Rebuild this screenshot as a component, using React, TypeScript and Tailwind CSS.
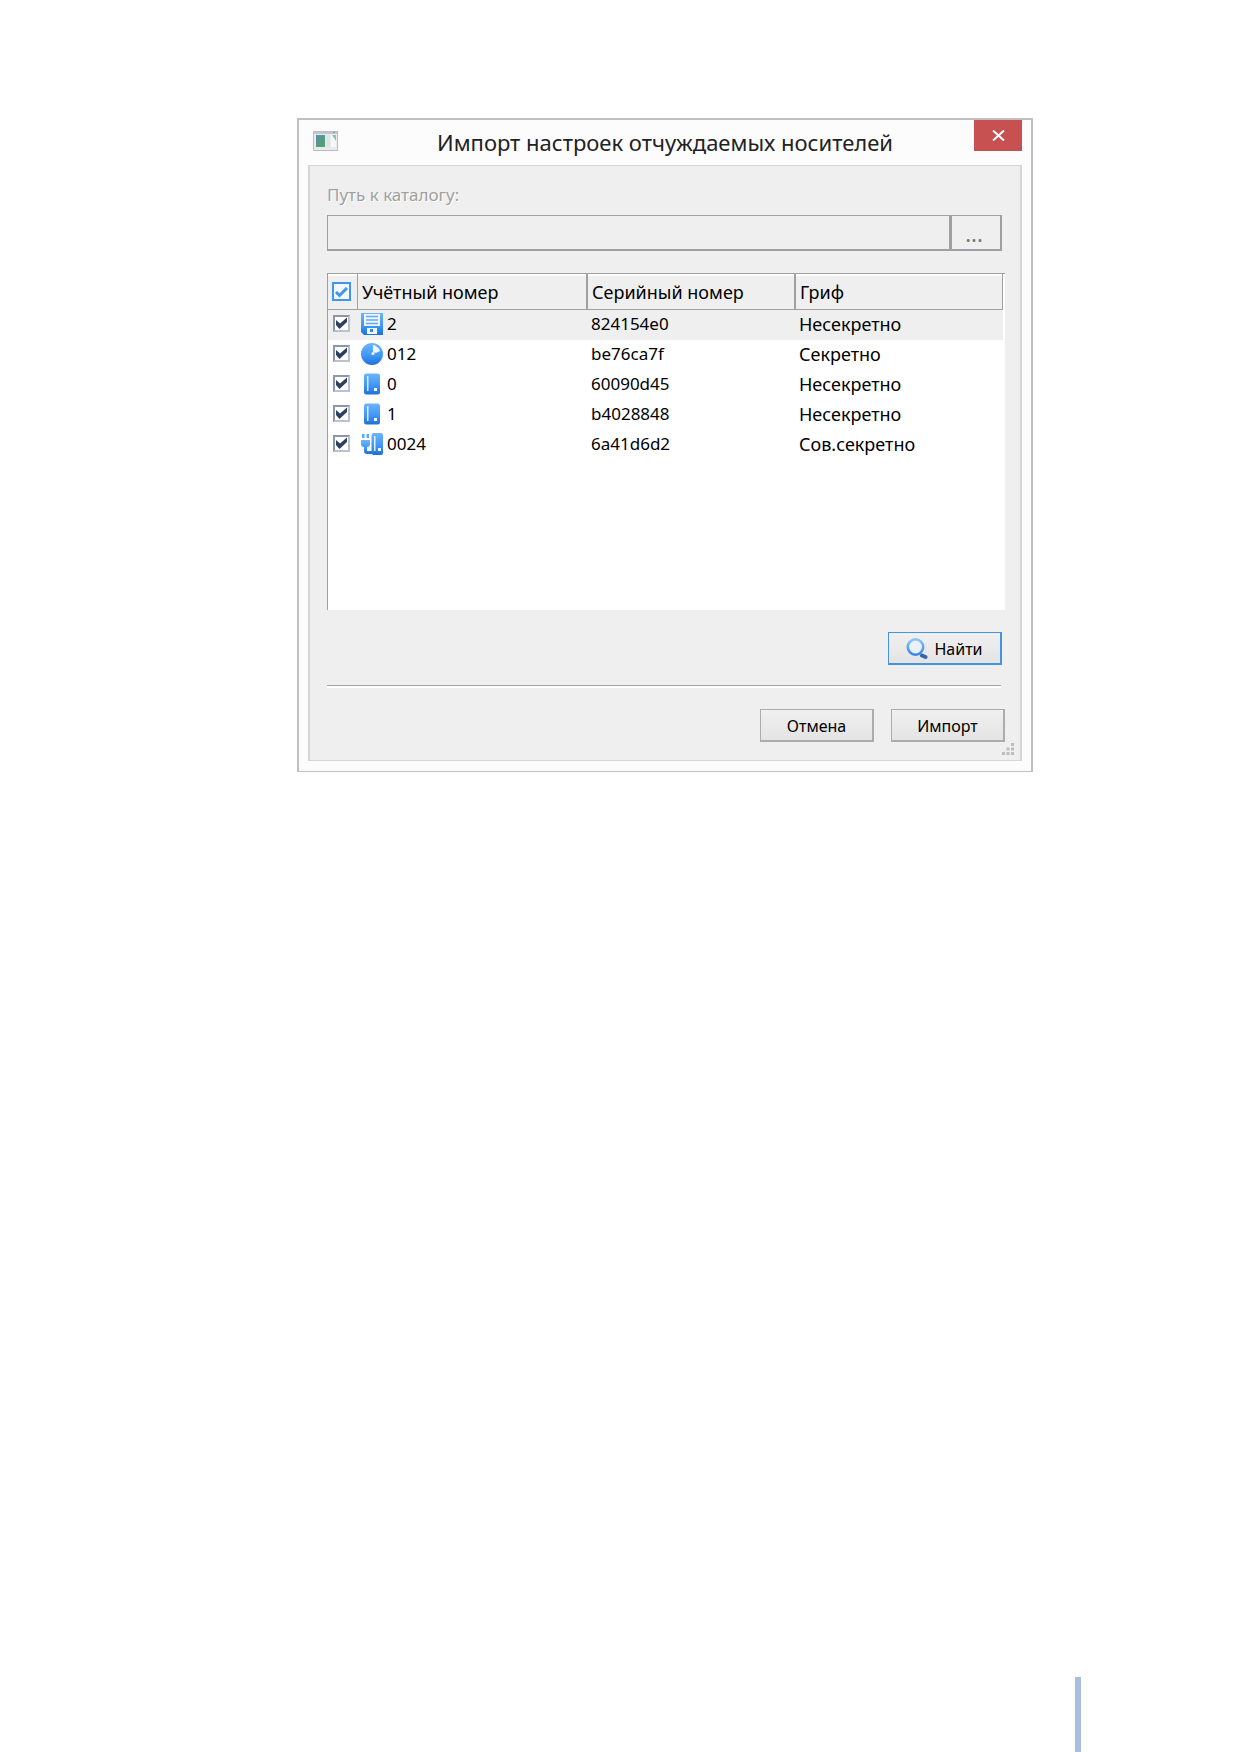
import React, { useState } from "react";
import clsx from "clsx";

type MediaKind = "floppy" | "disc" | "drive" | "usb";

interface MediaItem {
  id: string;
  serial: string;
  level: string;
  kind: MediaKind;
}

const items: MediaItem[] = [
  { id: "2", serial: "824154e0", level: "Несекретно", kind: "floppy" },
  { id: "012", serial: "be76ca7f", level: "Секретно", kind: "disc" },
  { id: "0", serial: "60090d45", level: "Несекретно", kind: "drive" },
  { id: "1", serial: "b4028848", level: "Несекретно", kind: "drive" },
  { id: "0024", serial: "6a41d6d2", level: "Сов.секретно", kind: "usb" },
];

function WindowIcon() {
  return (
    <svg width="25" height="20" viewBox="0 0 25 20" aria-hidden="true">
      <defs>
        <linearGradient id="win-pane" x1="0" y1="0" x2="1" y2="1">
          <stop offset="0" stopColor="#5b8fa6" />
          <stop offset="1" stopColor="#4fa568" />
        </linearGradient>
      </defs>
      <rect x="0.5" y="0.5" width="24" height="19" fill="#e9ebee" stroke="#b9bcc4" />
      <rect x="1" y="1" width="23" height="2" fill="#c3c6d2" />
      <rect x="20" y="1" width="2" height="1" fill="#8790a8" />
      <rect x="3" y="4" width="9" height="12" fill="url(#win-pane)" />
      <rect x="13" y="4" width="4" height="12" fill="#dfe4e6" />
      <rect x="18" y="4" width="5" height="12" fill="#f5f8f6" />
      <path d="M19 4h4v6z" fill="#8fc0a8" />
    </svg>
  );
}

function MediaIcon({ kind }: { kind: MediaKind }) {
  return (
    <svg width="22" height="22" viewBox="0 0 22 22" className="shrink-0" aria-hidden="true">
      <defs>
        <linearGradient id="media-blue" x1="0" y1="0" x2="0" y2="1">
          <stop offset="0" stopColor="#6db5fb" />
          <stop offset="0.6" stopColor="#3d95f5" />
          <stop offset="1" stopColor="#1f6fd6" />
        </linearGradient>
      </defs>
      {kind === "floppy" && (
        <>
          <path d="M0 0h22v22H3l-3-3z" fill="url(#media-blue)" />
          <rect x="3" y="1" width="16" height="12" fill="#eef6ff" />
          <path d="M5 3.500h12M5 7h12M5 10.500h12" stroke="#62aaf5" strokeWidth="1.500" />
          <rect x="6" y="15" width="10" height="6" fill="#eef6ff" />
          <rect x="9" y="16" width="3" height="3" fill="#3486e6" />
        </>
      )}
      {kind === "disc" && (
        <>
          <circle cx="11" cy="11" r="11" fill="url(#media-blue)" />
          <path d="M12 9V2q2.500 0 4 2 2.500 1 3 4l-4 2z" fill="#eef6ff" />
          <circle cx="12" cy="10.500" r="1.600" fill="#eef6ff" />
        </>
      )}
      {kind === "drive" && (
        <>
          <rect x="3" y="0.500" width="16" height="21" rx="2.500" fill="url(#media-blue)" />
          <rect x="6" y="3" width="1.500" height="15" fill="#d9ecff" />
          <rect x="13" y="15" width="3" height="3" fill="#f4faff" />
        </>
      )}
      {kind === "usb" && (
        <>
          <rect x="1" y="1" width="2.500" height="4" fill="#5aa9f8" />
          <rect x="5.500" y="1" width="2.500" height="4" fill="#5aa9f8" />
          <path d="M0 7h9v4q0 3-3 3v4h5v3H6q-3 0-3-3v-4q-3 0-3-3z" fill="url(#media-blue)" />
          <path d="M12 0h8q2 0 2 2v18q0 2-2 2h-8q-1.500-1-1.500-3V3q0-2 1.500-3z" fill="url(#media-blue)" />
          <rect x="13" y="3" width="1.500" height="15" fill="#e4f2ff" />
          <rect x="17" y="15" width="3" height="3" fill="#f4faff" />
        </>
      )}
    </svg>
  );
}

function SearchIcon() {
  return (
    <svg width="22" height="22" viewBox="0 0 22 22" aria-hidden="true">
      <defs>
        <linearGradient id="lens" x1="0" y1="0" x2="0" y2="1">
          <stop offset="0" stopColor="#8cc6fb" />
          <stop offset="1" stopColor="#2f86ec" />
        </linearGradient>
      </defs>
      <circle cx="9.500" cy="9" r="7.700" fill="#eaf1f8" stroke="url(#lens)" strokeWidth="2.600" />
      <path d="M16 17.500l3.500 1.500" stroke="#3565a8" strokeWidth="4" strokeLinecap="round" />
    </svg>
  );
}

interface TickProps {
  checked: boolean;
  onChange: () => void;
  label: string;
  header?: boolean;
}

function Tick({ checked, onChange, label, header }: TickProps) {
  return (
    <label className="grid w-fit place-items-center">
      <input
        type="checkbox"
        aria-label={label}
        checked={checked}
        onChange={onChange}
        className={clsx(
          "col-start-1 row-start-1 appearance-none",
          header
            ? "h-[19px] w-[19px] border-2 border-[#3e97ee] bg-[#f4f8fc]"
            : "h-[17px] w-[17px] border-2 border-t-[#8b97ab] border-l-[#8b97ab] border-r-[#b9c2d0] border-b-[#b9c2d0] bg-white"
        )}
      />
      {checked && (
        <svg
          width="17"
          height="17"
          viewBox="0 0 17 17"
          className="pointer-events-none col-start-1 row-start-1"
          fill="none"
          aria-hidden="true"
        >
          {header ? (
            <path d="M3 9l3.500 3.500L14 5" stroke="#3e97ee" strokeWidth="3" />
          ) : (
            <path d="M3 5v5l3.500 4L14 7V2.500L7 8.500z" fill="#2c4060" />
          )}
        </svg>
      )}
    </label>
  );
}

function SizeGrip() {
  return (
    <svg width="12" height="12" viewBox="0 0 12 12" fill="#bdbdbd" aria-hidden="true">
      <path d="M9 0h3v3H9zM9 4.500h3v3H9zM4.500 4.500h3v3h-3zM9 9h3v3H9zM4.500 9h3v3h-3zM0 9h3v3H0z" />
    </svg>
  );
}

const pushButton =
  "flex h-[33px] w-[114px] items-center justify-center border border-r-2 border-b-2 bg-linear-to-b from-[#f0f0f0] to-[#e4e4e4] pt-px text-[16px] leading-6";

const headCell = "border-b border-[#a0a0a0] pl-1 font-normal shadow-[inset_0_2px_0_#fff]";

export default function App() {
  const [checked, setChecked] = useState<string[]>(items.map((item) => item.id));

  const toggle = (id: string) =>
    setChecked((prev) => (prev.includes(id) ? prev.filter((x) => x !== id) : [...prev, id]));

  const allChecked = checked.length === items.length;

  return (
    <div className="flex min-h-screen flex-col bg-white pt-[118px] font-['Noto_Sans','Open_Sans',sans-serif] text-black">
      <section
        role="dialog"
        aria-labelledby="dialog-title"
        className="mr-[206px] ml-[297px] flex flex-col border-2 border-b border-[#c0c0c0] bg-[#fcfcfc] px-[9px] pb-[10px]"
      >
        <header className="flex h-[45px] items-start">
          <div className="w-12 pt-[11px] pl-[5px]">
            <WindowIcon />
          </div>
          <h1 id="dialog-title" className="flex-1 pt-[6px] text-center text-[22px] leading-8 text-[#222]">
            Импорт настроек отчуждаемых носителей
          </h1>
          <button
            type="button"
            aria-label="Закрыть"
            className="flex h-[31px] w-12 items-center justify-center bg-[#c75050]"
          >
            <svg width="13" height="11" viewBox="0 0 13 11" stroke="#fff" strokeWidth="2" aria-hidden="true">
              <path d="M1 0.500l11 10M12 0.500l-11 10" />
            </svg>
          </button>
        </header>

        <div className="flex flex-col border-x-2 border-y border-[#d6d6d6] bg-[#efefef] pt-[17px] pr-[15px] pb-[5px] pl-[17px]">
          <label
            htmlFor="catalog"
            className="text-[17px] leading-6 text-[#a0a0a0] [text-shadow:1px_1px_0_#fff]"
          >
            Путь к каталогу:
          </label>
          <div className="mt-2 mr-[3px] flex h-9">
            <input
              id="catalog"
              type="text"
              disabled
              className="min-w-0 flex-1 border border-r-2 border-b-2 border-[#a0a0a0] bg-[#efefef] px-2"
            />
            <button
              type="button"
              aria-label="Обзор"
              disabled
              className="w-[51px] border border-r-2 border-b-2 border-[#a0a0a0] pr-1 text-[22px] leading-6 text-[#777]"
            >
              ...
            </button>
          </div>

          <div className="mt-[22px] h-[337px] border-t border-l border-[#a0a0a0] bg-white pr-[2px]">
            <table className="w-full table-fixed border-separate border-spacing-0 text-left text-[18px] leading-6">
              <colgroup>
                <col className="w-[30px]" />
                <col className="w-[230px]" />
                <col className="w-[208px]" />
                <col />
              </colgroup>
              <thead>
                <tr className="h-9 bg-[#efefef]">
                  <th className={clsx(headCell, "border-r")}>
                    <Tick
                      header
                      checked={allChecked}
                      onChange={() => setChecked(allChecked ? [] : items.map((item) => item.id))}
                      label="Выбрать все"
                    />
                  </th>
                  <th className={clsx(headCell, "border-r-2")}>Учётный номер</th>
                  <th className={clsx(headCell, "border-r-2")}>Серийный номер</th>
                  <th className={clsx(headCell, "border-r")}>Гриф</th>
                </tr>
              </thead>
              <tbody>
                {items.map((item, i) => (
                  <tr key={item.id} className={clsx("h-[30px]", i === 0 && "bg-[#efefef]")}>
                    <td className="pb-[3px] pl-[5px]">
                      <Tick
                        checked={checked.includes(item.id)}
                        onChange={() => toggle(item.id)}
                        label={`Носитель ${item.id}`}
                      />
                    </td>
                    <td className="pb-[3px] pl-[3px]">
                      <div className="flex items-center gap-1 text-[17px] leading-6">
                        <MediaIcon kind={item.kind} />
                        <span>{item.id}</span>
                      </div>
                    </td>
                    <td className="pb-[3px] pl-[3px] text-[17px] leading-6">{item.serial}</td>
                    <td className="pb-[3px] pl-[3px]">{item.level}</td>
                  </tr>
                ))}
              </tbody>
            </table>
          </div>

          <div className="mt-[22px] mr-[3px] flex justify-end">
            <button type="button" className={clsx(pushButton, "gap-[6px] border-[#4494e4]")}>
              <SearchIcon />
              Найти
            </button>
          </div>

          <hr className="mt-5 mr-[4px] h-[3px] border-t border-[#a0a0a0] bg-white" />

          <div className="mt-[21px] flex justify-end gap-[17px]">
            <button type="button" className={clsx(pushButton, "border-[#acacac]")}>
              Отмена
            </button>
            <button type="button" className={clsx(pushButton, "border-[#acacac]")}>
              Импорт
            </button>
          </div>
          <div className="-mr-[9px] mt-px flex justify-end">
            <SizeGrip />
          </div>
        </div>
      </section>

      <div className="mt-auto mr-[158px] h-[75px] w-[6px] self-end bg-[#a7bfde]" />
    </div>
  );
}
